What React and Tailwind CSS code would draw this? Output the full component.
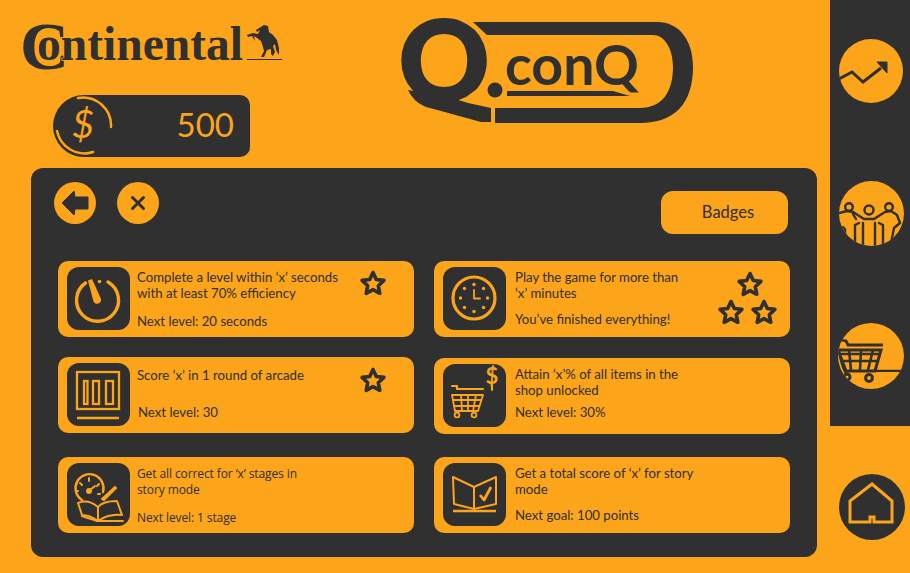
const D = "#303030";
const O = "#FCA41A";

function Star({ x = 14, y = 14 }) {
  const pts = [];
  for (let i = 0; i < 10; i++) {
    const r = i % 2 === 0 ? 11.5 : 5.6;
    const a = -Math.PI / 2 + (i * Math.PI) / 5;
    pts.push(`${(x + r * Math.cos(a)).toFixed(1)},${(y + r * Math.sin(a)).toFixed(1)}`);
  }
  return <polygon points={pts.join(" ")} fill="none" stroke={D} strokeWidth="3.6" strokeLinejoin="round" />;
}

function OneStar() {
  return (
    <svg width="28" height="28" viewBox="0 0 28 28" className="shrink-0"><Star /></svg>
  );
}

function ThreeStars() {
  return (
    <svg width="62" height="58" viewBox="0 0 62 58" className="shrink-0">
      <Star x={32} y={14} />
      <Star x={13} y={42} />
      <Star x={46} y={42} />
    </svg>
  );
}

const ic = { fill: "none", stroke: O, strokeWidth: 2, strokeLinecap: "round", strokeLinejoin: "round" };

function Timer() {
  return (
    <svg width="63" height="63" viewBox="0 0 63 63" {...ic} strokeWidth="3.4">
      <path d="M18.5 16 A21 21 0 1 0 41 15" />
      <circle cx="32.5" cy="14.5" r="1.8" fill={O} stroke="none" />
      <path d="M21 13.5 L25 12 L34 32 A4 4 0 0 1 26.5 34.5 Z" fill={O} stroke="none" />
    </svg>
  );
}
function Arcade() {
  return (
    <svg width="63" height="63" viewBox="0 0 63 63" {...ic} strokeWidth="2.3" strokeLinecap="butt" strokeLinejoin="miter">
      <rect x="10" y="9" width="42" height="37" />
      <rect x="17" y="18" width="3.5" height="23" />
      <rect x="26" y="18" width="6" height="23" />
      <rect x="39" y="18" width="7" height="23" />
      <path d="M10 55 H52" strokeWidth="2.6" />
    </svg>
  );
}
function StoryGauge() {
  return (
    <svg width="63" height="63" viewBox="0 0 63 63" {...ic}>
      <path d="M15 37 A14 14 0 1 1 36 29" strokeWidth="2.4" />
      <path d="M22 15 v3 M11 28 h-2 M32 21 l-2 2 M13 20 l2 2 M33 31 h-2" />
      <circle cx="22" cy="28" r="2" fill={O} />
      <path d="M23 27 L28 23" />
      <path d="M35 36 L48 24 L49 25 L37 37 Z" fill={O} />
      <path d="M11 40 C18 37 25 39 31 44 L31 58 C24 53 18 52 15 52 Z" />
      <path d="M31 44 C35 39 42 38 50 38 L55 52 C46 51 38 53 31 58" />
      <path d="M15 53 C22 56 26 56 30 58 H56" />
    </svg>
  );
}
function Clock() {
  const dots = [0, 45, 90, 135, 180, 225, 270, 315];
  return (
    <svg width="63" height="63" viewBox="0 0 63 63" {...ic} strokeWidth="3.2">
      <circle cx="31" cy="31" r="21" />
      {dots.map((d) => (
        <circle key={d} cx={31 + 13.5 * Math.cos((d * Math.PI) / 180)} cy={31 + 13.5 * Math.sin((d * Math.PI) / 180)} r="1.7" fill={O} stroke="none" />
      ))}
      <path d="M31 23 V31.5 H37" strokeWidth="1.8" />
    </svg>
  );
}
function ShopCart() {
  return (
    <svg width="63" height="63" viewBox="0 0 63 63" {...ic} strokeWidth="1.8">
      <text x="49" y="20" fontFamily="Lato, sans-serif" fontWeight="700" fontSize="22" textAnchor="middle" fill={O} stroke="none">$</text>
      <path d="M49 21 V26" strokeWidth="2" />
      <path d="M9 22 H14 V25 H40" strokeWidth="2.2" />
      <path d="M9 31 H40 L35 47 H12 Z" />
      <path d="M10 36 H38 M11 42 H36 M18 31 L19 47 M25 31 V47 M33 31 L30 47" />
      <circle cx="14" cy="51" r="2.4" />
      <circle cx="31" cy="51" r="2.4" />
    </svg>
  );
}
function BookCheck() {
  return (
    <svg width="63" height="63" viewBox="0 0 63 63" {...ic} strokeLinecap="butt">
      <path d="M10 14 L31 24 V46 L11 41 Z" />
      <path d="M31 24 L53 14 V41 L31 46" />
      <path d="M10 48 H53" strokeWidth="2.4" />
      <path d="M37 32 L41 37 L48 24" strokeWidth="2.8" />
    </svg>
  );
}

function Card({ Icon, title, next, titleClass, nextClass, cardClass, textClass, right, fontClass }) {
  return (
    <div className={`flex h-[76px] w-[356px] shrink-0 rounded-[10px] bg-[#FCA41A] px-[9px] py-[6px] ${cardClass}`}>
      <div className="h-[63px] w-[63px] shrink-0 rounded-xl bg-[#303030]"><Icon /></div>
      <div className={`min-w-0 flex-1 whitespace-nowrap text-[#303030] ${textClass} ${fontClass}`}>
        <div className={titleClass}>{title.map((t) => <div key={t}>{t}</div>)}</div>
        <div className={nextClass}>{next}</div>
      </div>
      {right}
    </div>
  );
}

function ContinentalLogo() {
  return (
    <svg width="264" height="78" viewBox="0 -16 264 78" className="block">
      <text x="-1" y="45" fontFamily="'Liberation Serif', serif" fontWeight="700" fontSize="68" fill={D}>C</text>
      <text x="16" y="36" fontFamily="'Liberation Serif', serif" fontWeight="700" fontSize="47.5" fill={D} stroke={O} strokeWidth="1.4" paintOrder="stroke" textLength="206" lengthAdjust="spacingAndGlyphs">ontinental</text>
      <path d="M226 35.5 H261" stroke={D} strokeWidth="1" />
      <path d="M243 1 L247 2 L248 8 L252 11 L256 16 L258 24 L258 31 L255 26 L254 20 L252 22 L254 28 L252 32 L250 30 L250 25 L246 26 L243 33 L240 33 L243 27 L242 23 L240 17 L236 14 L233 12 L234 17 L231 12 L227 13 L226 11 L232 9 L237 10 L239 6 L236 8 L235 6 Z" fill={D} />
    </svg>
  );
}

function QConqLogo() {
  return (
    <svg width="298" height="130" viewBox="-6 -20 298 130" className="block">
      <text x="-4" y="82" fontFamily="Lato, sans-serif" fontWeight="800" fontSize="113" fill={D}>Q</text>
      <path d="M92 58 L84 60 L75 69 L64 77 L52 82 V106 H92 Z" fill={O} />
      <path d="M71 2 H255 C277 2 291 20 291 47 C291 84 272 103 238 103 H93 V88 H238 C260 88 271 72 271 47 C271 28 262 15 251 15 H85 Z" fill={D} />
      <path d="M6 70 C12 82 20 86 28 88 L79 102 H89 V88 L66 83 L50 78 Z" fill={D} />
      <circle cx="93" cy="70" r="7.5" fill={D} />
      <text x="103" y="65" fontFamily="Lato, sans-serif" fontWeight="700" fontSize="55.5" fill={D}>conQ</text>
      <path d="M105 71 H211 L228 76 H105 Z" fill={D} />
    </svg>
  );
}

export default function App() {
  return (
    <div className="flex h-[573px] w-[910px] overflow-hidden bg-[#FCA41A] font-['Lato',sans-serif]">
      <div className="flex w-[830px] shrink-0 flex-col">
        <div className="flex h-[168px] shrink-0">
          <div className="w-[396px] shrink-0">
            <div className="ml-[21px] mt-[8px]"><ContinentalLogo /></div>
            <div className="ml-[53px] mt-[9px] flex h-[62px] w-[197px] items-center justify-between rounded-l-[31px] rounded-r-[10px] bg-[#303030] pb-[3px] pr-[16px]">
              <svg width="62" height="62" viewBox="0 0 62 62" className="mt-[3px] shrink-0" fill="none" stroke={O} strokeLinecap="round">
                <path d="M25 3 A28 28 0 0 1 58 32" strokeWidth="2.5" />
                <path d="M4 36 A28 28 0 0 0 40 57" strokeWidth="2.5" />
                <text x="30" y="43" textAnchor="middle" fontFamily="Lato, sans-serif" fontStyle="italic" fontSize="38" fill={O} stroke="none">$</text>
              </svg>
              <span className="text-[33px] leading-none text-[#FCA41A]">500</span>
            </div>
          </div>
          <QConqLogo />
        </div>

        <div className="ml-[31px] h-[389px] w-[786px] rounded-xl bg-[#303030]">
          <div className="flex h-[93px] items-start pl-[23px] pt-[14px]">
            <button className="flex h-[42px] w-[42px] items-center justify-center rounded-full bg-[#FCA41A]">
              <svg width="28" height="26" viewBox="0 0 28 26"><path d="M1 13 L13 1 L14 7 H27 V19 H14 L13 25 Z" fill={D} stroke={D} strokeLinejoin="round" /></svg>
            </button>
            <button className="ml-[21px] flex h-[42px] w-[42px] items-center justify-center rounded-full bg-[#FCA41A]">
              <svg width="16" height="16" viewBox="0 0 16 16"><path d="M2.5 2.5 L13.5 13.5 M13.5 2.5 L2.5 13.5" stroke={D} strokeWidth="3" strokeLinecap="round" /></svg>
            </button>
            <button className="ml-[502px] mt-[9px] h-[43px] w-[127px] rounded-xl bg-[#FCA41A] pl-[7px] text-[16.5px] text-[#303030]">Badges</button>
          </div>
          <div className="flex gap-[20px] pl-[27px]">
            <div className="flex flex-col">
              <Card Icon={Timer} title={["Complete a level within ‘x’ seconds", "with at least 70% efficiency"]} next="Next level: 20 seconds" titleClass="pt-[2px]" nextClass="mt-[12px]" cardClass="" textClass="ml-[7px] text-[13.2px] leading-[16px]" right={<div className="mr-[18px] mt-[3px]"><OneStar /></div>} />
              <Card Icon={Arcade} title={["Score ‘x’ in 1 round of arcade"]} next="Next level: 30" titleClass="pt-[4px]" nextClass="ml-[1px] mt-[21px]" cardClass="mt-[20px]" textClass="ml-[7px] text-[13.2px] leading-[16px]" right={<div className="mr-[18px] mt-[4px]"><OneStar /></div>} />
              <Card Icon={StoryGauge} title={["Get all correct for ‘x’ stages in", "story mode"]} next="Next level: 1 stage" titleClass="pt-[3px]" nextClass="mt-[12px]" cardClass="mt-[24px]" textClass="ml-[7px] text-[12px] leading-[16px]" fontClass="font-['Open_Sans',sans-serif] tracking-[-0.1px]" />
            </div>
            <div className="flex flex-col">
              <Card Icon={Clock} title={["Play the game for more than", "‘x’ minutes"]} next="You’ve finished everything!" titleClass="pt-[2px]" nextClass="mt-[10px]" cardClass="" textClass="ml-[9px] text-[13.2px] leading-[16px]" right={<div className="mr-[1px] mt-[4px]"><ThreeStars /></div>} />
              <Card Icon={ShopCart} title={["Attain ‘x’% of all items in the", "shop unlocked"]} next="Next level: 30%" titleClass="pt-[2px]" nextClass="mt-[6px]" cardClass="mt-[21px]" textClass="ml-[9px] text-[13.2px] leading-[16px]" />
              <Card Icon={BookCheck} title={["Get a total score of ‘x’ for story", "mode"]} next="Next goal: 100 points" titleClass="pt-[2px]" nextClass="mt-[10px]" cardClass="mt-[23px]" textClass="ml-[9px] text-[13.2px] leading-[16px]" />
            </div>
          </div>
        </div>
      </div>

      <div className="flex w-[80px] shrink-0 flex-col items-center">
        <div className="flex h-[426px] w-[80px] flex-col items-center bg-[#303030] pl-[2px] pt-[39px]">
          <div className="h-[64px] w-[64px] overflow-hidden rounded-full bg-[#FCA41A]">
            <svg width="64" height="64" viewBox="0 0 64 64">
              <path d="M0 40 L13 33 L24 43 L42 29" fill="none" stroke={D} strokeWidth="3" strokeLinejoin="miter" />
              <path d="M38 23 L48 23 L48 34 Z" fill={D} stroke={D} strokeLinejoin="round" />
            </svg>
          </div>
          <div className="mt-[78px] h-[65px] w-[65px] overflow-hidden rounded-full bg-[#FCA41A]">
            <svg width="65" height="65" viewBox="0 0 65 65" fill="none" stroke={D} strokeWidth="2.4" strokeLinejoin="round" strokeLinecap="round">
              <circle cx="10" cy="26" r="3.8" />
              <circle cx="30" cy="29" r="4.5" />
              <circle cx="50" cy="26" r="3.8" />
              <path d="M0 32 L8 30 L14 31 L25 38 H35 L46 31 L52 30 L58 34 L61 42 L55 47 L52 62" />
              <path d="M24 42 V65 M36 42 V65" />
              <path d="M16 65 V44 L20 42 M44 65 V44 L40 42" />
              <path d="M4 46 L6 48 V60 M14 33 L17 38" />
            </svg>
          </div>
          <div className="mt-[77px] h-[66px] w-[66px] overflow-hidden rounded-full bg-[#FCA41A]">
            <svg width="66" height="66" viewBox="0 0 66 66" fill="none" stroke={D} strokeWidth="3">
              <path d="M3 17 L8 18 L10 22 H45" strokeWidth="2.8" />
              <path d="M0 27 H43 L37 48 H8 L0 27" />
              <path d="M1 31 H41 M4 38 H39 M11 27 L13 47 M23 27 L22 47 M35 27 L30 47" strokeWidth="2.6" />
              <path d="M1 28 C3 40 6 50 10 52" strokeWidth="2" />
              <path d="M35 47.8 H66" strokeWidth="2.2" />
              <circle cx="9" cy="54" r="3" />
              <circle cx="31" cy="55" r="3.4" strokeWidth="3" />
            </svg>
          </div>
        </div>
        <div className="ml-[4px] mt-[48px] h-[66px] w-[66px] rounded-full bg-[#303030]">
          <svg width="66" height="66" viewBox="0 0 66 66" fill="none" stroke={O} strokeWidth="3" strokeLinejoin="miter">
            <path d="M11 48 V27 L33 10 L53 27 V48 H35 V43 H31 V48 Z" />
          </svg>
        </div>
      </div>
    </div>
  );
}
